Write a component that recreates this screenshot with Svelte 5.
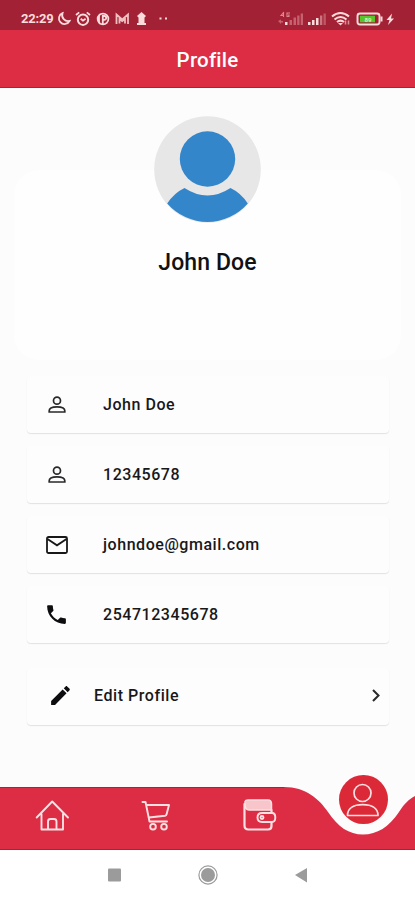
<script>
  const details = [
    { icon: "person", text: "John Doe" },
    { icon: "person", text: "12345678" },
    { icon: "mail", text: "johndoe@gmail.com" },
    { icon: "phone", text: "254712345678" },
  ];
</script>

<div class="screen">
  <div class="status">
    <span class="time">22:29</span>
    <svg class="left-icons" width="116" height="16" viewBox="0 0 116 16" fill="none" stroke="#fbdcdc" stroke-width="2">
      <!-- moon -->
      <path d="M6.500 2.200A5.600 5.600 0 1 0 13.500 10 6 6 0 0 1 6.500 2.200z" stroke-width="1.800" />
      <!-- alarm -->
      <circle cx="27" cy="8.700" r="5.200" stroke-width="2" />
      <path d="M20 4l3.200-2.600M34 4l-3.200-2.600M24.700 7.700l2.300 2 2.600-2" stroke-width="1.800" />
      <!-- parking -->
      <circle cx="47" cy="8" r="5.400" stroke-width="1.700" />
      <path d="M43 5.500a5 5 0 0 0 0 5zM46.800 13V5h1.500a1.800 1.800 0 0 1 0 3.800H46.800" stroke-width="1.800" />
      <!-- mail -->
      <path d="M60.500 13V3.500l5.700 5 5.800-5V13M63.500 12.500V8l2.700 2.200L69 8v4.500" stroke-width="1.800" opacity="0.850" />
      <path d="M85.500 1l4.500 4-1.500 1.500V12h1.500v2h-9v-2h1.500V6.500L81 5z" fill="#fbdcdc" stroke="none" />
      <path d="M103.500 7.500h2M109 7.500h2" />
    </svg>
    <svg class="right-icons" width="118" height="18" viewBox="0 0 118 18">
      <g fill="#e9a3aa">
        <path d="M6 2l-3 3.500h3M5.500 2v5M12 3H9v3.500h2V5h-1" fill="none" stroke="#e9a3aa" stroke-width="1.100" opacity="0.800" />
        <path d="M0 11l3-1.500V11h2v1.500H3V14z" opacity="0.500" />
        <rect x="7" y="12" width="2.500" height="3" fill="#fbdcdc" />
        <rect x="11.500" y="10" width="2.500" height="5" opacity="0.500" />
        <rect x="15.500" y="7.500" width="2.500" height="7.500" opacity="0.500" />
        <rect x="19.200" y="5.500" width="2.300" height="9.500" opacity="0.500" />
        <rect x="22.700" y="3.500" width="2.300" height="11.500" opacity="0.500" />
      </g>
      <g fill="#fbdcdc">
        <rect x="30" y="12" width="2.500" height="3" />
        <rect x="34" y="10" width="2.500" height="5" />
        <rect x="38" y="8" width="2.500" height="7" />
        <rect x="42" y="5.500" width="2.300" height="9.500" opacity="0.450" />
        <rect x="45.500" y="3.500" width="2.300" height="11.500" opacity="0.300" />
      </g>
      <g fill="none" stroke="#fbdcdc" stroke-width="2.100">
        <path d="M54 6.500q8.500-7 17 0M56.500 9.500q6-5 12 0M59 12q3.500-2.600 7 0" />
        <path d="M60 13h5l-2.500 2.500z" fill="#fbdcdc" stroke="none" />
        <path d="M67.500 10.500v4M70.500 10.500v4" stroke-width="1.500" opacity="0.600" />
      </g>
      <rect x="79.500" y="3.500" width="22" height="11" rx="2.500" fill="#a32134" stroke="#fbdcdc" stroke-width="1.900" />
      <rect x="82" y="5.800" width="15" height="6.500" fill="#58c52b" />
      <rect x="102.500" y="6.500" width="2" height="5" fill="#fbdcdc" />
      <text x="90" y="11.500" class="percent">89</text>
      <path d="M114 3.500l-5.500 6.500h3l-1.500 5 6-6.500h-3z" fill="#fbdcdc" />
    </svg>
  </div>

  <header>Profile</header>

  <main>
    <section class="card">
      <svg class="avatar" width="107" height="107" viewBox="0 0 107 107">
        <circle cx="53.500" cy="53.500" r="53.300" fill="#e8e7e8" />
        <circle cx="53.500" cy="43" r="27.700" fill="#3486ca" />
        <path d="M30.500 72Q53.500 87 76.500 72Q87 77 93.800 87.500A53.300 53.300 0 0 1 13.200 87.500Q20 77 30.500 72z" fill="#3486ca" />
      </svg>
      <h1>John Doe</h1>
    </section>

    <div class="rows">
      {#each details as item}
        <div class="row">
          <span class="icon">
            {#if item.icon === "person"}
              <svg width="18" height="18" viewBox="0 0 18 18" fill="none" stroke="#29292c" stroke-width="1.700">
                <circle cx="9" cy="4.700" r="3.500" />
                <path d="M1.200 16v-1.200C1.200 12 5 10.800 9 10.800s7.800 1.200 7.800 4V16z" />
              </svg>
            {:else if item.icon === "mail"}
              <svg width="22" height="18" viewBox="0 0 22 18" fill="none" stroke="#18181b" stroke-width="1.800">
                <rect x="1" y="1" width="20" height="16" rx="1.500" />
                <path d="M1.500 3L11 9.300 20.500 3" />
              </svg>
            {:else}
              <svg width="25" height="25" viewBox="0 0 24 24" fill="#0d0d10">
                <path d="M6.620 10.790c1.440 2.830 3.760 5.140 6.590 6.590l2.200-2.200c.27-.27.67-.36 1.020-.24 1.120.37 2.330.57 3.570.57.55 0 1 .45 1 1V20c0 .55-.45 1-1 1-9.390 0-17-7.610-17-17 0-.55.45-1 1-1h3.500c.55 0 1 .45 1 1 0 1.250.2 2.450.57 3.570.11.35.03.74-.25 1.020l-2.200 2.200z" />
              </svg>
            {/if}
          </span>
          <span>{item.text}</span>
        </div>
      {/each}

      <div class="row edit">
        <span class="icon">
          <svg width="25" height="25" viewBox="0 0 24 24" fill="#0d0d10">
            <path d="M3 17.250V21h3.750L17.810 9.940l-3.750-3.750L3 17.250zM20.710 7.040c.39-.39.39-1.020 0-1.410l-2.340-2.340c-.39-.39-1.020-.39-1.410 0l-1.830 1.830 3.750 3.750 1.830-1.830z" />
          </svg>
        </span>
        <span>Edit Profile</span>
        <svg class="chevron" width="8" height="13" viewBox="0 0 8 13" fill="none" stroke="#29292c" stroke-width="2">
          <path d="M1 1l5.500 5.500L1 12" />
        </svg>
      </div>
    </div>
  </main>

  <nav>
    <svg width="415" height="80" viewBox="0 770 415 80">
      <path d="M0 787H284C306 787 319 799 328 812C338 827 349 834.500 363 834.500C377 834.500 389 827 399 812C404 804 409 799 415 796V850H0z" fill="#dc2d44" />
      <path d="M0 787.500H284M0 849.500H415" stroke="#cc132e" />
      <circle cx="363.500" cy="799.500" r="24.500" fill="#dc2938" />
      <g fill="none" stroke="#fde0e2" stroke-width="1.900" stroke-linejoin="round" stroke-linecap="round">
        <!-- home -->
        <path d="M36.700 817.500L52.200 801.500 68 817.500M41.500 814V829.500H63V814M48 829V821.500Q48 819 50.500 819H54Q56.500 819 56.500 821.500V829" />
        <!-- cart -->
        <path d="M142.500 802H145.500L149.500 821.500H167M146.500 805H169L166.500 814.500Q166.300 815.500 165 815.700L149 817.500" />
        <circle cx="153" cy="826.700" r="2.800" />
        <circle cx="164" cy="826.700" r="2.800" />
        <!-- wallet -->
        <path d="M245 801.500Q245.500 800 248 800H268Q271.500 800 271.500 804V810H249Q245 810 245 804z" fill="#f8c5cb" stroke-width="1.500" />
        <path d="M271.500 813V810M244.500 804V825.500Q244.500 829.500 248.500 829.500H268Q271.500 829.500 271.500 826V822" stroke-width="2.200" />
        <path d="M262 813H272Q275.300 813 275.300 817.500Q275.300 822 272 822H262Q257.500 822 257.500 817.500Q257.500 813 262 813z" />
        <circle cx="262" cy="817.500" r="1.500" />
        <!-- account -->
        <circle cx="362.500" cy="793" r="8.500" stroke-width="1.700" />
        <path d="M347.500 815.500C347.500 808 354 804.700 362.700 804.700S378 808 378 815.500z" stroke-width="1.700" />
      </g>
    </svg>
  </nav>

  <div class="system">
    <svg width="210" height="22" viewBox="0 0 210 22" fill="#9b9b9b">
      <rect x="5" y="4.500" width="13" height="13" rx="1" />
      <circle cx="105" cy="11" r="9.100" fill="none" stroke="#9b9b9b" stroke-width="1.200" />
      <circle cx="105" cy="11" r="7" />
      <path d="M192 11l12-7v14.500z" />
    </svg>
  </div>
</div>

<style>
  :global(body) {
    margin: 0;
    background: #fcfcfc;
  }

  .screen {
    width: 415px;
    height: 900px;
    display: flex;
    flex-direction: column;
    overflow: hidden;
    background: #fcfcfc;
    color: #18181b;
    font-family: Roboto, sans-serif;
  }

  svg {
    display: block;
    flex: none;
  }

  .status {
    height: 30px;
    box-sizing: border-box;
    display: flex;
    align-items: center;
    padding: 7px 19px 0 21px;
    background: #a32134;
    color: #fbdcdc;
  }

  .time {
    width: 35px;
    font-size: 13px;
    font-weight: 700;
    letter-spacing: -0.2px;
  }

  .right-icons {
    margin-left: auto;
  }

  .percent {
    font-size: 6px;
    font-weight: 700;
    text-anchor: middle;
    fill: #d8f7b8;
  }

  header {
    height: 58px;
    box-sizing: border-box;
    border-bottom: 1px solid #cc132e;
    background: #dc2d44;
    color: #fff;
    font-size: 20.500px;
    font-weight: 500;
    letter-spacing: 0.2px;
    line-height: 60px;
    text-align: center;
  }

  main {
    flex: 1;
  }

  .card {
    width: 387px;
    height: 190px;
    margin: 82px auto 0;
    display: flex;
    flex-direction: column;
    align-items: center;
    border-radius: 25px;
    background: #fefefe;
  }

  .avatar {
    margin-top: -54px;
  }

  h1 {
    margin: 26px 0 0;
    font-size: 23px;
    font-weight: 500;
    line-height: 28px;
    color: #111;
    letter-spacing: 0.1px;
  }

  .rows {
    display: flex;
    flex-direction: column;
    gap: 13px;
    padding: 16px 26px 0 27px;
  }

  .row {
    height: 57px;
    display: flex;
    align-items: center;
    border-radius: 4px;
    background: #fdfdfd;
    box-shadow: 0 1px 1px #e2e2e2;
    font-size: 16px;
    font-weight: 500;
    letter-spacing: 0.55px;
  }

  .icon {
    width: 59px;
    margin-right: 17px;
    display: flex;
    justify-content: center;
  }

  .edit {
    box-sizing: border-box;
    margin-top: 12px;
    padding-bottom: 2px;
  }

  .edit .icon {
    width: 67px;
    margin-right: 0;
  }

  .chevron {
    margin-left: auto;
    margin-right: 9px;
  }

  nav {
    height: 80px;
  }

  .system {
    height: 50px;
    display: flex;
    align-items: center;
    justify-content: center;
    background: #fff;
  }
</style>
